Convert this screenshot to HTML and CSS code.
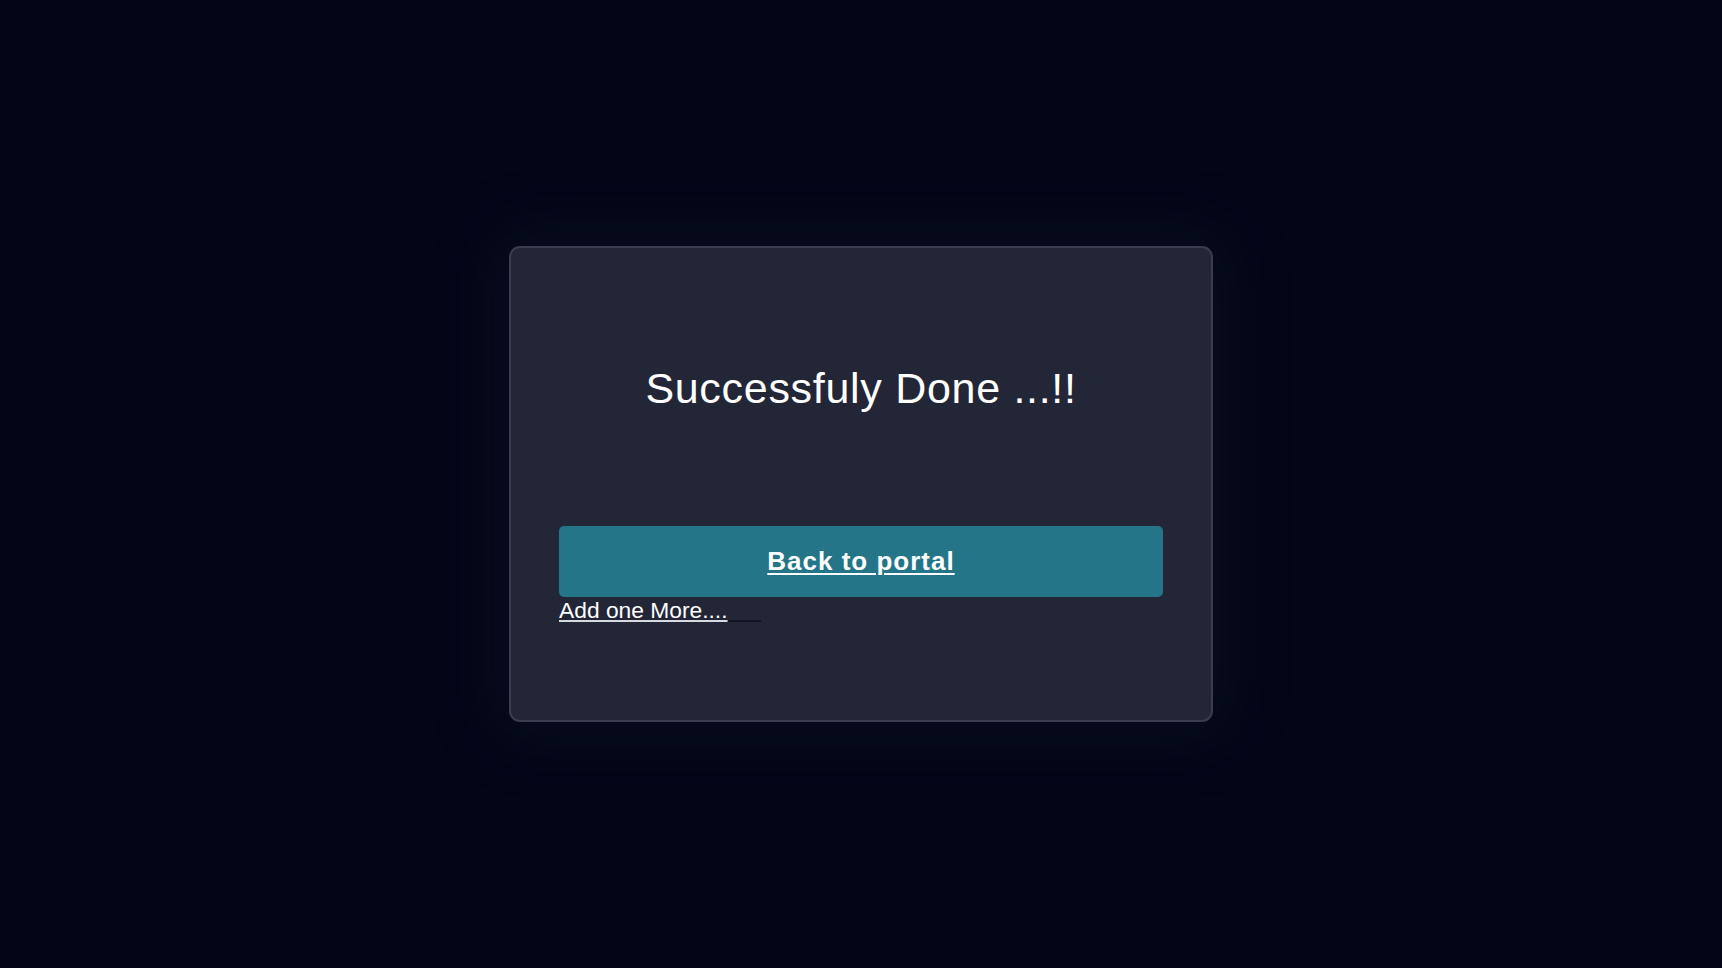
FILE: index.html
```html
<!DOCTYPE html>
<html lang="en">
<head>
<meta charset="utf-8">
<title>Success</title>
<link rel="stylesheet" href="styles.css">
</head>
<body>
  <main class="page">
    <section class="card">
      <h1 class="title">Successfuly Done ...!!</h1>
      <a class="portal-btn" href="#">Back to portal</a>
      <div class="more-row">
        <a class="more-link" href="#">Add one More....</a><span class="more-tail"></span>
      </div>
    </section>
  </main>
</body>
</html>
```
FILE: styles.css
```css
* { box-sizing: border-box; }
html, body {
  margin: 0;
  padding: 0;
  height: 100%;
}
body {
  background: #020617;
  font-family: "Liberation Sans", Arial, sans-serif;
  color: #ffffff;
}
.page {
  height: 100vh;
  display: flex;
  align-items: center;
  justify-content: center;
}
.card {
  width: 704px;
  height: 476px;
  background: #232637;
  border: 2px solid #3a3d4f;
  border-radius: 11px;
  padding: 116px 48px 48px;
  display: flex;
  flex-direction: column;
  box-shadow: 0 0 60px 16px rgba(28, 32, 54, 0.3);
}
.title {
  margin: 0;
  font-size: 43px;
  font-weight: 400;
  letter-spacing: 0.7px;
  line-height: 48px;
  text-align: center;
  color: #ffffff;
}
.portal-btn {
  margin-top: 114px;
  height: 71px;
  display: flex;
  align-items: center;
  justify-content: center;
  background: #237587;
  border-radius: 5px;
  color: #ffffff;
  font-size: 26px;
  font-weight: 700;
  letter-spacing: 1px;
  text-decoration: underline;
  text-decoration-thickness: 2px;
  text-underline-offset: 3px;
}
.more-row {
  margin-top: 1px;
  display: flex;
  align-items: flex-end;
}
.more-link {
  font-size: 22.8px;
  line-height: 25px;
  color: #ffffff;
  text-decoration: underline;
  text-decoration-color: #d8d9e0;
  text-decoration-thickness: 2px;
  text-underline-offset: 2px;
}
.more-tail {
  display: inline-block;
  width: 33px;
  height: 2px;
  margin-bottom: 1px;
  background: #121522;
}
```
